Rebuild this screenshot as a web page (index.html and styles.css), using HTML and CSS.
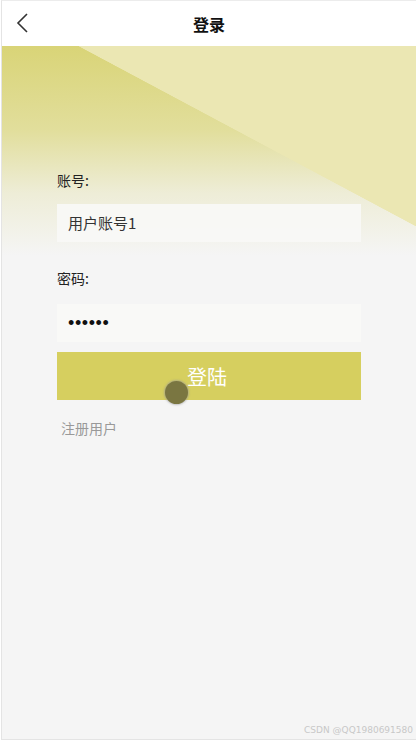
FILE: index.html
```html
<!doctype html>
<html>
<head>
<meta charset="utf-8">
<title>登录</title>
<link rel="stylesheet" href="styles.css">
</head>
<body>
	<div class="page">
		<div class="header">
			<a class="back" href="#">
				<svg width="14" height="20" viewBox="0 0 14 20"><path d="M12 1 L3 10 L12 19" fill="none" stroke="#333" stroke-width="1.6"/></svg>
			</a>
			<div class="title">登录</div>
		</div>

		<div class="main">
			<div class="form">
				<label class="lbl">账号:</label>
				<div class="input">用户账号1</div>
				<label class="lbl lbl-pwd">密码:</label>
				<div class="input pwd">••••••</div>
				<div class="btnwrap">
					<button class="btn">登陆</button>
					<span class="touch"></span>
				</div>
				<a class="reg" href="#">注册用户</a>
			</div>
			<div class="mark">CSDN @QQ1980691580</div>
		</div>
	</div>
</body>
</html>
```

FILE: styles.css
```css
/*기본 초기화*/
* {box-sizing: border-box;}
body {margin: 0; background-color: #ffffff; font-family: 'Noto Sans CJK SC', 'Noto Sans', sans-serif;}
a {text-decoration: none}

.page {width: 415px; height: 740px; border: 1px solid #e4e4e4; border-right: none; border-top-color: #ececec; margin-left: 1px; display: flex; flex-direction: column; background-color: #f5f5f5;}

.header {height: 45px; background-color: #ffffff; display: flex; align-items: center; justify-content: center; position: relative;}
.header>.back {position: absolute; left: 13px; top: 12px; display: block; line-height: 0;}
.header>.title {font-size: 16px; font-weight: bold; color: #111111;}

.main {flex: 1; display: flex; flex-direction: column; justify-content: space-between;
	background:
		linear-gradient(to bottom left, #ebe7b3 50%, rgba(235, 231, 179, 0) 50.2%) right top / 337px 180px no-repeat,
		linear-gradient(to bottom, #d9d477 0%, rgba(222, 218, 140, 0.85) 40%, rgba(232, 230, 190, 0.55) 70%, rgba(245, 245, 245, 0) 100%) left top / 100% 210px no-repeat,
		#f5f5f5;}

.form {padding: 124px 55px 0 55px; display: flex; flex-direction: column;}
.form>.lbl {font-size: 14px; line-height: 20px; color: #222222;}
.form>.lbl-pwd {margin-top: 26px;}
.form>.input {height: 38px; margin-top: 14px; background-color: rgba(248, 248, 246, 0.92); padding-left: 11px; font-size: 15px; line-height: 38px; color: #333333;}
.form>.pwd {margin-top: 16px; font-family: 'Liberation Sans', sans-serif; font-size: 18px; letter-spacing: 0.6px; color: #111111;}
.form>.btnwrap {margin-top: 10px; position: relative;}
.form>.btnwrap>.btn {width: 100%; height: 48px; border: none; outline: none; background-color: #d6cf5f; color: #ffffff; font-family: 'Noto Sans CJK SC', sans-serif; font-size: 20px; padding-left: 2px; display: block;}
.form>.btnwrap>.touch {position: absolute; left: 108px; top: 29px; width: 23px; height: 23px; border-radius: 50%; background-color: #7a7641; box-shadow: 0 0 2px 1px rgba(150, 150, 150, 0.6);}
.form>.reg {margin-top: 18px; margin-left: 4px; font-size: 14px; line-height: 20px; color: #999999;}

.mark {align-self: flex-end; margin: 0 3px 4px 0; font-family: 'DejaVu Sans', sans-serif; font-size: 9px; color: #c8c8c8;}
```
